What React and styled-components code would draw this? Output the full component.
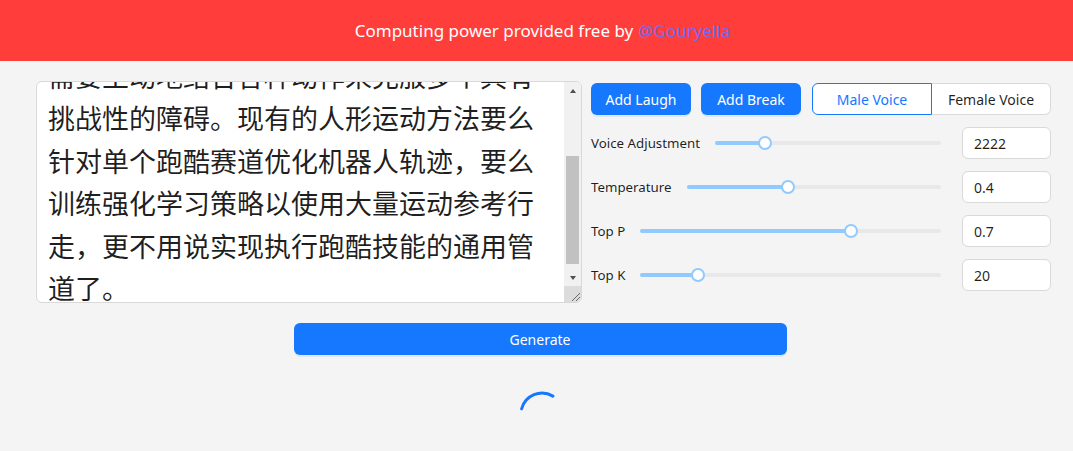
import React, { useLayoutEffect, useRef, useState } from "react";
import styled, { createGlobalStyle } from "styled-components";

const GlobalStyle = createGlobalStyle`
  html, body { margin: 0; padding: 0; background: #f4f4f4; }
  body {
    font-family: "Noto Sans", "Noto Sans CJK SC", sans-serif;
    color: rgba(0, 0, 0, 0.88);
  }
`;

const Banner = styled.header`
  height: 61px;
  padding-left: 12px;
  background: #ff3d3b;
  display: flex;
  align-items: center;
  justify-content: center;
  color: #ffffff;
  font-size: 17px;
`;

const BannerLink = styled.a`
  color: #7b68ee;
  text-decoration: none;
  margin-left: 5px;
`;

const Main = styled.main`
  padding: 20px 22px 0 36px;
`;

const TopRow = styled.div`
  display: flex;
  align-items: flex-start;
  gap: 9px;
`;

const TextBox = styled.div`
  width: 547px;
  height: 222px;
  box-sizing: border-box;
  display: flex;
  border: 1px solid #d9d9d9;
  border-radius: 6px;
  background: #ffffff;
  overflow: hidden;
`;

const TextArea = styled.textarea`
  flex: 1;
  min-width: 0;
  box-sizing: border-box;
  padding: 4px 11px;
  border: none;
  background: transparent;
  font-family: "Noto Sans CJK SC", sans-serif;
  font-size: 27px;
  line-height: 1.5714;
  color: rgba(0, 0, 0, 0.88);
  outline: none;
  resize: none;
  overflow-y: auto;
  scrollbar-width: none;
`;

const ScrollBar = styled.div`
  width: 17px;
  flex: none;
  display: flex;
  flex-direction: column;
  background: #f1f1f1;
`;

const ArrowButton = styled.div`
  height: 17px;
  flex: none;
  display: flex;
  align-items: center;
  justify-content: center;
`;

const Arrow = styled.span`
  width: 0;
  height: 0;
  border-left: 3.5px solid transparent;
  border-right: 3.5px solid transparent;
  ${(p) =>
    p.$down
      ? "border-top: 4px solid #505050;"
      : "border-bottom: 4px solid #505050;"}
`;

const Track = styled.div`
  flex: 1;
  padding: 0 2px;
`;

const Thumb = styled.div`
  background: #c1c1c1;
`;

const Corner = styled.div`
  height: 16px;
  flex: none;
  background: #dcdcdc;
  display: flex;
  align-items: flex-end;
  justify-content: flex-end;
`;

const Grip = () => (
  <svg width="12" height="12" viewBox="0 0 12 12">
    <path d="M11 3 L3 11 M11 7 L7 11" stroke="#6b6b6b" strokeWidth="1" fill="none" />
  </svg>
);

const Panel = styled.div`
  flex: 1;
  display: flex;
  flex-direction: column;
  gap: 12px;
  padding-top: 2px;
`;

const ButtonRow = styled.div`
  display: flex;
  align-items: center;
  gap: 10px;
`;

const PrimaryButton = styled.button`
  height: 32px;
  width: ${(p) => p.$w}px;
  padding: 0;
  border: none;
  border-radius: 6px;
  background: #1677ff;
  color: #ffffff;
  font-family: "Noto Sans", sans-serif;
  font-size: 14px;
  box-shadow: 0 2px 0 rgba(5, 145, 255, 0.1);
  cursor: pointer;
`;

const Segmented = styled.div`
  display: flex;
  margin-left: 1px;
`;

const SegmentOption = styled.button`
  height: 32px;
  width: ${(p) => p.$w}px;
  padding: 0;
  background: #ffffff;
  font-family: "Noto Sans", sans-serif;
  font-size: 14px;
  cursor: pointer;
  border: 1px solid ${(p) => (p.$active ? "#1677ff" : "#d9d9d9")};
  color: ${(p) => (p.$active ? "#1677ff" : "rgba(0,0,0,0.88)")};
  border-radius: ${(p) => (p.$first ? "6px 0 0 6px" : "0 6px 6px 0")};
  ${(p) => (!p.$first ? "border-left: none;" : "")}
`;

const ParamRow = styled.div`
  display: flex;
  align-items: center;
  height: 32px;
`;

const ParamLabel = styled.span`
  font-size: 13.3px;
  white-space: nowrap;
  color: rgba(0, 0, 0, 0.88);
`;

const SliderBox = styled.div`
  flex: 1;
  position: relative;
  height: 14px;
  margin: 0 21px 0 15px;
`;

const Rail = styled.div`
  position: absolute;
  left: 0;
  right: 0;
  top: 5px;
  height: 4px;
  border-radius: 2px;
  background: #e8e8e8;
`;

const SliderTrack = styled.div`
  position: absolute;
  left: 0;
  top: 5px;
  height: 4px;
  border-radius: 2px;
  background: #91caff;
`;

const Handle = styled.div`
  position: absolute;
  top: 2px;
  width: 10px;
  height: 10px;
  margin-left: -5px;
  border-radius: 50%;
  background: #ffffff;
  box-shadow: 0 0 0 2px #91caff;
`;

const NumberInput = styled.input`
  width: 89px;
  height: 32px;
  box-sizing: border-box;
  padding: 0 11px;
  border: 1px solid #d9d9d9;
  border-radius: 6px;
  background: #ffffff;
  font-family: "Noto Sans", sans-serif;
  font-size: 14px;
  color: rgba(0, 0, 0, 0.88);
  outline: none;
`;

const GenerateRow = styled.div`
  display: flex;
  justify-content: center;
  margin-top: 20px;
  padding-right: 7px;
`;

const GenerateButton = styled(PrimaryButton)`
  width: 493px;
`;

const SpinnerRow = styled.div`
  display: flex;
  justify-content: center;
  margin-top: 35px;
  padding-right: 3px;
`;

const Spinner = () => (
  <svg width="48" height="48" viewBox="0 0 48 48">
    <path
      d="M3.6 18.9 A21 21 0 0 1 34.9 6.1"
      fill="none"
      stroke="#1677ff"
      strokeWidth="3"
      strokeLinecap="round"
    />
  </svg>
);

const Slider = ({ frac }) => (
  <SliderBox>
    <Rail />
    <SliderTrack style={{ width: `${frac * 100}%` }} />
    <Handle style={{ left: `${frac * 100}%` }} />
  </SliderBox>
);

const TEXT =
  "跑酷是腿式运动领域的一项重大挑战，它要求机器人在复杂的环境中快速地移动，需要主动地结合各种动作来克服多个具有挑战性的障碍。现有的人形运动方法要么针对单个跑酷赛道优化机器人轨迹，要么训练强化学习策略以使用大量运动参考行走，更不用说实现执行跑酷技能的通用管道了。";

const params = [
  { label: "Voice Adjustment", value: "2222", frac: 0.2222 },
  { label: "Temperature", value: "0.4", frac: 0.4 },
  { label: "Top P", value: "0.7", frac: 0.7 },
  { label: "Top K", value: "20", frac: 19 / 99 },
];

const TRACK_H = 170;

export default function App() {
  const ref = useRef(null);
  const [thumb, setThumb] = useState({ top: 58, height: 106 });

  const syncThumb = () => {
    const el = ref.current;
    if (!el) return;
    const { scrollTop, scrollHeight, clientHeight } = el;
    if (scrollHeight <= clientHeight) return;
    const height = Math.max(20, (TRACK_H * clientHeight) / scrollHeight);
    const top = ((TRACK_H - height) * scrollTop) / (scrollHeight - clientHeight);
    setThumb({ top, height });
  };

  useLayoutEffect(() => {
    if (ref.current) ref.current.scrollTop = 116;
    syncThumb();
  }, []);

  return (
    <>
      <GlobalStyle />
      <Banner>
        Computing power provided free by
        <BannerLink href="#">@Gouryella</BannerLink>
      </Banner>
      <Main>
        <TopRow>
          <TextBox>
            <TextArea ref={ref} defaultValue={TEXT} onScroll={syncThumb} />
            <ScrollBar>
              <ArrowButton>
                <Arrow />
              </ArrowButton>
              <Track>
                <Thumb style={{ marginTop: thumb.top, height: thumb.height }} />
              </Track>
              <ArrowButton>
                <Arrow $down />
              </ArrowButton>
              <Corner>
                <Grip />
              </Corner>
            </ScrollBar>
          </TextBox>
          <Panel>
            <ButtonRow>
              <PrimaryButton $w={100}>Add Laugh</PrimaryButton>
              <PrimaryButton $w={100}>Add Break</PrimaryButton>
              <Segmented>
                <SegmentOption $w={120} $active $first>
                  Male Voice
                </SegmentOption>
                <SegmentOption $w={119}>Female Voice</SegmentOption>
              </Segmented>
            </ButtonRow>
            {params.map((p) => (
              <ParamRow key={p.label}>
                <ParamLabel>{p.label}</ParamLabel>
                <Slider frac={p.frac} />
                <NumberInput defaultValue={p.value} />
              </ParamRow>
            ))}
          </Panel>
        </TopRow>
        <GenerateRow>
          <GenerateButton>Generate</GenerateButton>
        </GenerateRow>
        <SpinnerRow>
          <Spinner />
        </SpinnerRow>
      </Main>
    </>
  );
}
